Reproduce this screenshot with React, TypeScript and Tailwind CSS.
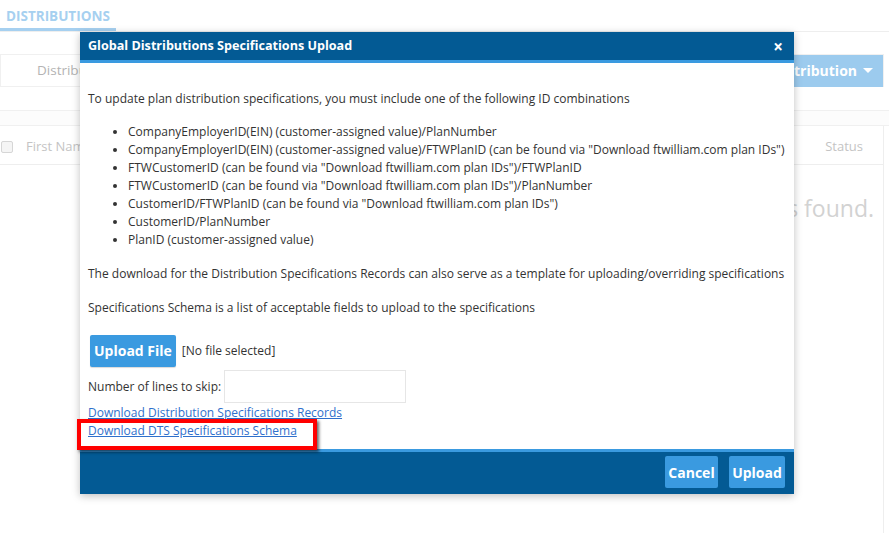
import React from "react";

const ids = [
  "CompanyEmployerID(EIN) (customer-assigned value)/PlanNumber",
  'CompanyEmployerID(EIN) (customer-assigned value)/FTWPlanID (can be found via "Download ftwilliam.com plan IDs")',
  'FTWCustomerID (can be found via "Download ftwilliam.com plan IDs")/FTWPlanID',
  'FTWCustomerID (can be found via "Download ftwilliam.com plan IDs")/PlanNumber',
  'CustomerID/FTWPlanID (can be found via "Download ftwilliam.com plan IDs")',
  "CustomerID/PlanNumber",
  "PlanID (customer-assigned value)",
];

const Background = () => {
  return (
    <div className="flex flex-col">
      {/* tabs */}
      <div className="h-[32px] border-b border-[#eeeeee] flex">
        <div className="w-[116px] border-b-[3px] border-[#a6d0f0] pl-[6px] pt-[8px] text-[13.5px] font-bold text-[#a6d0f0] leading-[16px]">
          DISTRIBUTIONS
        </div>
      </div>

      {/* toolbar */}
      <div className="mt-[22px] h-[33px] flex items-center border border-[#f0f0f0] mr-[5px]">
        <span className="pl-[36px] text-[13.5px] text-[#b3b3b3]">Distributions</span>
        <div className="ml-auto h-[32px] bg-[#9ccbee] flex items-center px-[10px] gap-[6px] text-white font-bold text-[14px]">
          New Distribution
          <span className="w-0 h-0 border-l-[5px] border-r-[5px] border-t-[5px] border-l-transparent border-r-transparent border-t-white" />
        </div>
      </div>

      {/* table */}
      <div className="mt-[23px] h-[16px] border-t border-b border-[#f0f0f0] bg-[#fcfcfc]" />
      <div className="border-r border-[#eeeeee] mr-[5px] h-[407px] flex flex-col">
        <div className="h-[39px] pt-[3px] border-b border-[#eeeeee] flex items-center">
          <span className="ml-[1px] w-[12px] h-[12px] border border-[#d6d6d6] rounded-[2px] bg-[#f5f5f5]" />
          <span className="ml-[13px] text-[13px] text-[#c4c4c4]">First Name</span>
          <span className="ml-auto mr-[20px] text-[13px] text-[#c4c4c4]">Status</span>
        </div>
        <div className="mt-[26px] text-right pr-[9px] text-[23px] text-[#d2d2d2]">
          No distribution requests found.
        </div>
      </div>
    </div>
  );
};

export default function App() {
  return (
    <div
      className="relative w-[889px] h-[534px] overflow-hidden bg-white"
      style={{ fontFamily: '"Open Sans", "Noto Sans", sans-serif' }}
    >
      <Background />

      {/* modal */}
      <div className="absolute left-[80px] top-[32px] w-[714px] bg-white shadow-[0_2px_8px_rgba(0,0,0,0.25)] flex flex-col">
        <div className="h-[31px] bg-[#035a94] border-b-[3px] border-[#3a9ae0] flex items-center px-[8px]">
          <span className="text-white font-bold text-[12.6px]">Global Distributions Specifications Upload</span>
          <span className="ml-auto mr-[3px] text-white font-bold text-[17px] leading-none">×</span>
        </div>

        <div className="px-[8px] pt-[27px] pb-[9px] text-[12px] text-[#333333] leading-[18px]">
          <p>To update plan distribution specifications, you must include one of the following ID combinations</p>
          <ul className="mt-[15px] pl-[40px] list-disc">
            {ids.map((t) => (
              <li key={t}>{t}</li>
            ))}
          </ul>
          <p className="mt-[16px]">
            The download for the Distribution Specifications Records can also serve as a template for uploading/overriding specifications
          </p>
          <p className="mt-[16px]">Specifications Schema is a list of acceptable fields to upload to the specifications</p>

          <div className="mt-[18px] flex items-center gap-[6px]">
            <button className="ml-[2px] h-[32px] px-[4px] bg-[#3a9ae0] rounded-[2px] text-white font-bold text-[14px] shadow-[0_1px_1px_rgba(0,0,0,0.15)]">
              Upload File
            </button>
            <span>[No file selected]</span>
          </div>

          <div className="mt-[3px] flex items-center gap-[3px]">
            <span>Number of lines to skip:</span>
            <input className="w-[182px] h-[33px] border border-[#e6e6e6] outline-none" />
          </div>

          <div className="mt-[1px] flex flex-col leading-[18px]">
            <a href="#" className="text-[#2f70cc] underline">Download Distribution Specifications Records</a>
            <a href="#" className="text-[#2f70cc] underline">Download DTS Specifications Schema</a>
          </div>
        </div>

        <div className="h-[45px] bg-[#035a94] border-t-[3px] border-[#3a9ae0] flex items-center justify-end gap-[11px] pr-[9px] pb-[2px]">
          <button className="w-[53px] h-[32px] bg-[#3a9ae0] rounded-[2px] text-white font-bold text-[14px]">Cancel</button>
          <button className="w-[56px] h-[32px] bg-[#3a9ae0] rounded-[2px] text-white font-bold text-[14px]">Upload</button>
        </div>
      </div>

      {/* annotation */}
      <div className="absolute left-[77px] top-[419px] w-[240px] h-[31px] border-[4px] border-[#ff0000] shadow-[2px_2px_3px_rgba(0,0,0,0.6)]" />
    </div>
  );
}
